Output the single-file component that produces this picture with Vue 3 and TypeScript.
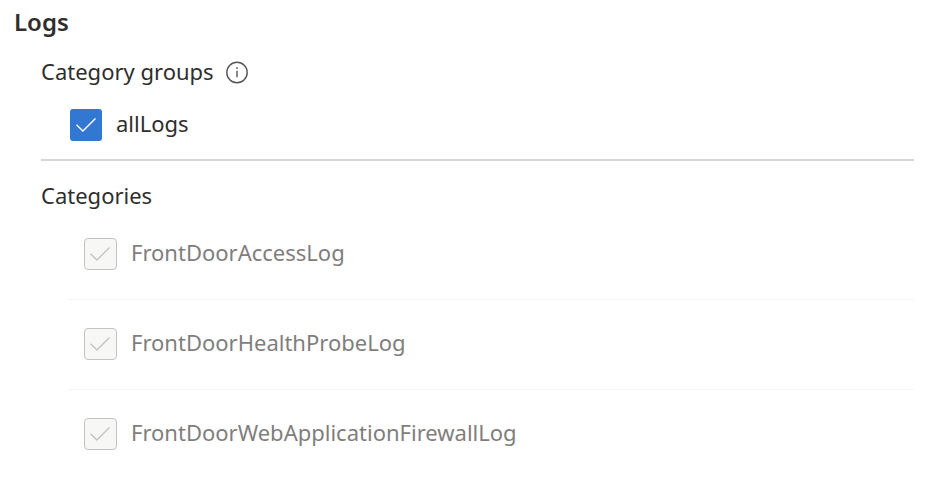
<script setup lang="ts">
interface LogCategory {
  id: string
  label: string
}

const categories: LogCategory[] = [
  { id: 'access', label: 'FrontDoorAccessLog' },
  { id: 'probe', label: 'FrontDoorHealthProbeLog' },
  { id: 'waf', label: 'FrontDoorWebApplicationFirewallLog' },
]
</script>

<template>
  <main class="logs">
    <h2 class="title">Logs</h2>
    <div class="body">
      <section class="groups">
        <h3 class="heading">
          Category groups
          <button class="info" type="button" aria-label="Info">
            <svg viewBox="0 0 24 24" width="24" height="24" fill="none" stroke="#555" stroke-width="1.4">
              <circle cx="12" cy="12.5" r="10.2" />
              <path d="M12 10.7v6.6M12 7.3v1.6" />
            </svg>
          </button>
        </h3>
        <label class="option">
          <span class="check">
            <input class="box" type="checkbox" checked />
            <svg class="tick" viewBox="0 0 32 32"><path d="M6.5 15.7l6.4 6.4L25.5 9.5" /></svg>
          </span>
          <span class="label">allLogs</span>
        </label>
      </section>
      <section class="categories">
        <h3 class="heading">Categories</h3>
        <ul class="list">
          <li v-for="c in categories" :key="c.id" class="item">
            <label class="option disabled">
              <span class="check">
                <input class="box" type="checkbox" checked disabled />
                <svg class="tick" viewBox="0 0 32 32"><path d="M6 15.7l6.4 6.4L25 9.5" /></svg>
              </span>
              <span class="label">{{ c.label }}</span>
            </label>
          </li>
        </ul>
      </section>
    </div>
  </main>
</template>

<style>
body {
  margin: 0;
  background: #fff;
}
</style>

<style scoped>
.logs {
  font-family: "Noto Sans", "Open Sans", sans-serif;
  font-size: 22px;
  line-height: 32px;
  color: #2f2e2d;
  padding: 6px 16px 0 14px;
}
.title {
  margin: 0;
  font-size: 24px;
  font-weight: 600;
}
.body {
  padding-left: 27px;
}
.groups {
  padding: 17px 0 18px;
  border-bottom: 2px solid #d6d6d6;
}
.heading {
  display: flex;
  align-items: flex-start;
  gap: 11px;
  margin: 0;
  font-size: 22px;
  font-weight: 400;
}
.info {
  display: flex;
  margin-top: 5px;
  padding: 0;
  border: 0;
  background: none;
}
.option {
  display: flex;
  align-items: flex-start;
  gap: 14px;
}
.label {
  line-height: 28px;
}
.groups .option {
  margin: 22px 0 0 29px;
}
.check {
  display: grid;
  width: 32px;
  height: 32px;
}
.box,
.tick {
  grid-area: 1 / 1;
  width: 100%;
  height: 32px;
}
.box {
  appearance: none;
  box-sizing: border-box;
  margin: 0;
  border-radius: 3px;
  background: #3277d1;
}
.tick {
  fill: none;
  stroke: #fff;
  stroke-width: 1.4;
  pointer-events: none;
}
.categories {
  padding-top: 18px;
}
.disabled {
  color: #7f7e7d;
}
.disabled .check {
  width: 33px;
}
.disabled .box {
  border: 1px solid #c4c3c2;
  border-radius: 4px;
  background: #f7f7f6;
}
.disabled .tick {
  stroke: #c4c3c2;
}
.list {
  list-style: none;
  margin: 0 0 0 27px;
  padding: 0;
}
.item {
  padding: 28px 16px 29px;
  border-bottom: 1px solid #f5f5f5;
}
.item:first-child {
  padding-top: 27px;
}
.item:last-child {
  border: 0;
  padding-bottom: 0;
}
</style>
